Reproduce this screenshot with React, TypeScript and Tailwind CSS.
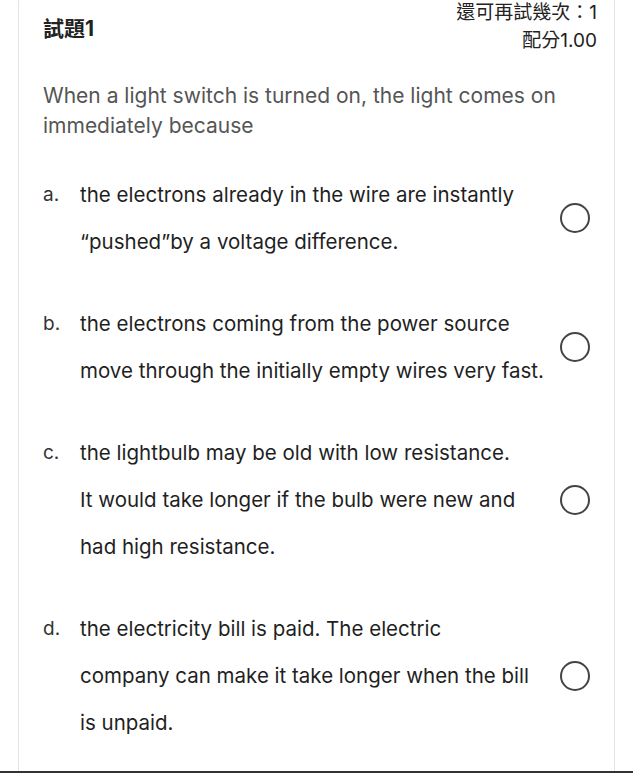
import React from 'react';

const options = [
  { key: 'a.', lines: ['the electrons already in the wire are instantly', '“pushed”by a voltage difference.'] },
  { key: 'b.', lines: ['the electrons coming from the power source', 'move through the initially empty wires very fast.'] },
  {
    key: 'c.',
    lines: [
      'the lightbulb may be old with low resistance.',
      'It would take longer if the bulb were new and',
      'had high resistance.',
    ],
  },
  {
    key: 'd.',
    lines: [
      'the electricity bill is paid. The electric',
      'company can make it take longer when the bill',
      'is unpaid.',
    ],
  },
];

const Option = ({ label, lines }: { label: string; lines: string[] }) => (
  <div className="flex items-center">
    <div className="flex flex-1">
      <span className="w-[37px] text-[19px] leading-[47px] text-[#333]">{label}</span>
      <div className="text-[20.5px] leading-[47px] text-[#1f1f1f] whitespace-nowrap">
        {lines.map((l, i) => (
          <div key={i}>{l}</div>
        ))}
      </div>
    </div>
    <div className="mr-[7px] h-[30px] w-[30px] shrink-0 rounded-full border-2 border-[#444]" />
  </div>
);

export default function App() {
  return (
    <div
      className="h-[773px] overflow-hidden border-b-2 border-[#333] bg-white"
      style={{ fontFamily: 'Inter, "Noto Sans CJK TC", sans-serif' }}
    >
      <div className="mx-[18px] -mt-[10px] h-[800px] rounded-xl border border-[#e3e4ea] pl-[24px] pr-[17px] pt-2">
        <div className="flex justify-between">
          <div className="pt-[16px] text-[21px] font-bold leading-[28px] text-[#222]">試題1</div>
          <div className="text-right text-[19px] leading-[28px] text-[#222]">
            <div>還可再試幾次：1</div>
            <div>配分1.00</div>
          </div>
        </div>
        <p className="mt-[26px] text-[21px] leading-[30px] text-[#555]">
          When a light switch is turned on, the light comes on
          <br />
          immediately because
        </p>
        <div className="mt-[30px] flex flex-col gap-[35px]">
          {options.map((o) => (
            <Option key={o.key} label={o.key} lines={o.lines} />
          ))}
        </div>
      </div>
    </div>
  );
}
